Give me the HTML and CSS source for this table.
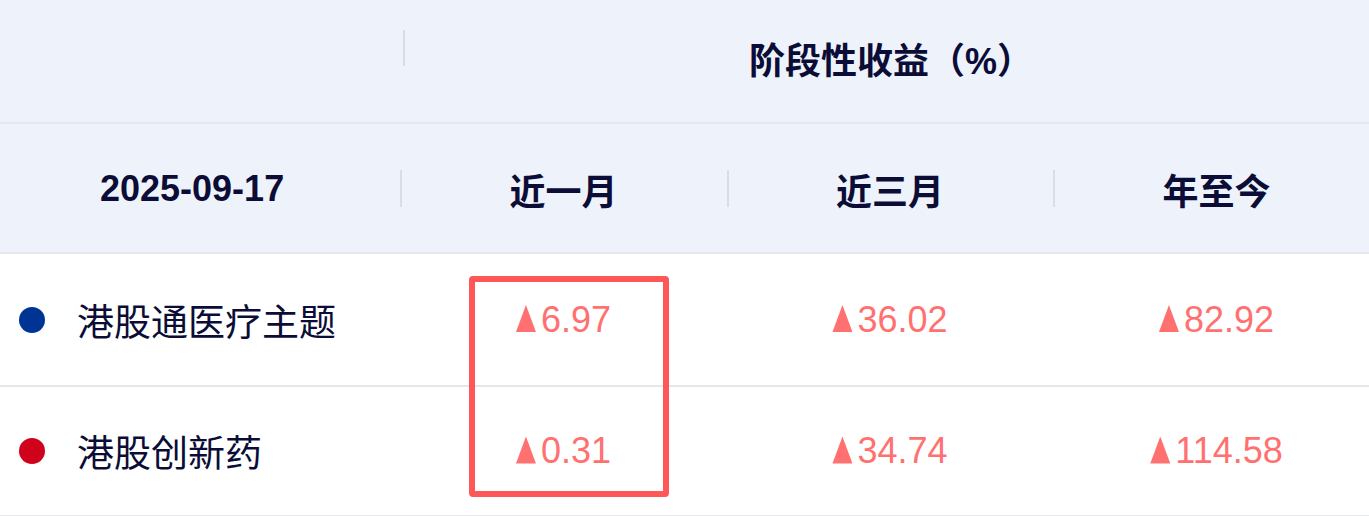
FILE: index.html
```html
<!DOCTYPE html>
<html lang="zh-CN">
<head>
<meta charset="utf-8">
<link rel="stylesheet" href="styles.css">
</head>
<body>
<div class="table">
  <div class="head head-top">
    <div class="cell"></div>
    <div class="cell span3 divided top-divided"><span class="title">阶段性收益（%）</span></div>
  </div>
  <div class="head head-sub">
    <div class="cell date">2025-09-17</div>
    <div class="cell divided">近一月</div>
    <div class="cell divided">近三月</div>
    <div class="cell divided">年至今</div>
  </div>
  <div class="row row-1">
    <div class="cell name"><span class="dot blue"></span>港股通医疗主题</div>
    <div class="cell num"><span class="up" aria-label="▲"></span>6.97</div>
    <div class="cell num"><span class="up" aria-label="▲"></span>36.02</div>
    <div class="cell num"><span class="up" aria-label="▲"></span>82.92</div>
  </div>
  <div class="row row-2">
    <div class="cell name"><span class="dot red"></span>港股创新药</div>
    <div class="cell num"><span class="up" aria-label="▲"></span>0.31</div>
    <div class="cell num"><span class="up" aria-label="▲"></span>34.74</div>
    <div class="cell num"><span class="up" aria-label="▲"></span>114.58</div>
  </div>
  <div class="highlight"></div>
</div>
</body>
</html>
```

FILE: styles.css
```css
html, body {
  margin: 0;
  padding: 0;
  background: #ffffff;
  overflow: hidden;
}
body {
  width: 1369px;
  height: 516px;
  font-family: "Liberation Sans", "Noto Sans CJK SC", sans-serif;
  color: #0b0d36;
}
.table {
  position: relative;
  width: 1380px;
}
.head, .row {
  display: grid;
  grid-template-columns: 400px 327px 326px 327px;
  border-bottom: 2px solid #e6e7ea;
}
.head {
  background: #eef3fb;
  font-weight: 700;
  font-size: 36px;
}
.head-top { height: 122px; }
.head-sub { height: 128px; }
.row-1 { height: 131px; }
.row-2 { height: 128px; }
.cell {
  position: relative;
  display: flex;
  align-items: center;
  justify-content: center;
}
.span3 { grid-column: 2 / 5; }
.title { margin-top: -6px; margin-left: 2px; }
.divided::before {
  content: "";
  position: absolute;
  left: 0;
  top: 50%;
  width: 2px;
  height: 37px;
  margin-top: -18px;
  background: #dcdde3;
}
.top-divided::before {
  left: 3px;
  top: 30px;
  margin-top: 0;
  height: 36px;
}
.date {
  justify-content: flex-start;
  padding-left: 100px;
}
.head-sub .cell { padding-top: 2px; }
.name {
  justify-content: flex-start;
  font-size: 37px;
  font-weight: 400;
  color: #0b0d36;
  padding-left: 19px;
}
.dot {
  width: 26px;
  height: 26px;
  border-radius: 50%;
  margin-right: 32px;
  flex: none;
}
.dot.blue { background: #003494; }
.dot.red { background: #d0021b; }
.num {
  font-size: 36px;
  color: #ff7170;
}
.up {
  display: inline-block;
  width: 20px;
  height: 27px;
  margin-right: 5px;
  margin-top: -2px;
  background: #ff7170;
  clip-path: polygon(50% 0, 100% 100%, 0 100%);
}
.highlight {
  position: absolute;
  left: 469px;
  top: 276px;
  width: 200px;
  height: 221px;
  box-sizing: border-box;
  border: 6px solid #ff5657;
  border-radius: 4px;
}
```
